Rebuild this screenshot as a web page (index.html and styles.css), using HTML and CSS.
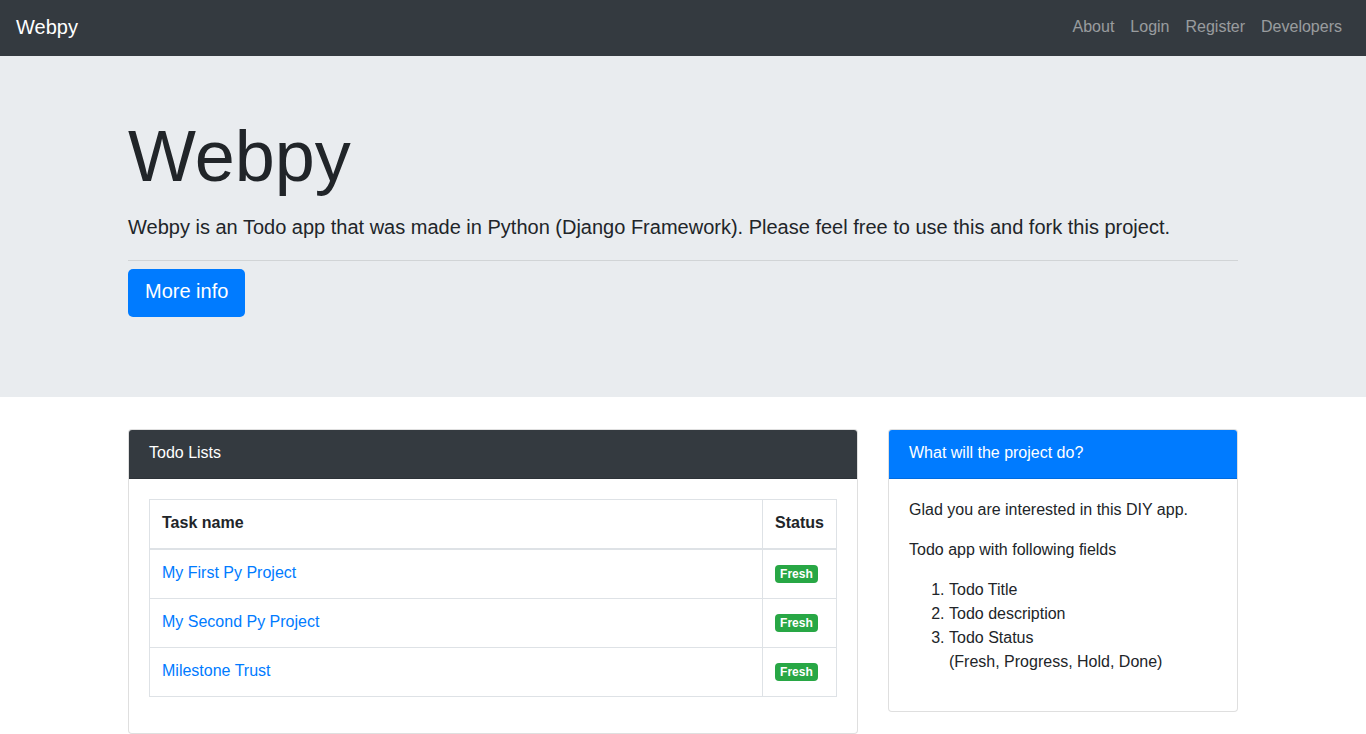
FILE: index.html
```html
<!DOCTYPE html>
<html lang="en">
<head>
<meta charset="utf-8">
<title>Webpy</title>
<link rel="stylesheet" href="styles.css">
</head>
<body>
<nav class="navbar">
  <a class="brand" href="#">Webpy</a>
  <ul class="nav">
    <li><a class="nav-link" href="#">About</a></li>
    <li><a class="nav-link" href="#">Login</a></li>
    <li><a class="nav-link" href="#">Register</a></li>
    <li><a class="nav-link" href="#">Developers</a></li>
  </ul>
</nav>

<section class="jumbotron">
  <div class="container">
    <h1 class="display">Webpy</h1>
    <p class="lead">Webpy is an Todo app that was made in Python (Django Framework). Please feel free to use this and fork this project.</p>
    <hr class="divider">
    <a class="btn-primary" href="#">More info</a>
  </div>
</section>

<main class="container cards">
  <div class="card">
    <div class="card-header dark">Todo Lists</div>
    <div class="card-body">
      <table class="table">
        <thead>
          <tr><th class="col-name">Task name</th><th class="col-status">Status</th></tr>
        </thead>
        <tbody>
          <tr><td><a href="#">My First Py Project</a></td><td><span class="badge">Fresh</span></td></tr>
          <tr><td><a href="#">My Second Py Project</a></td><td><span class="badge">Fresh</span></td></tr>
          <tr><td><a href="#">Milestone Trust</a></td><td><span class="badge">Fresh</span></td></tr>
        </tbody>
      </table>
    </div>
  </div>

  <div class="card side">
    <div class="card-header primary">What will the project do?</div>
    <div class="card-body text-body">
      <p>Glad you are interested in this DIY app.</p>
      <p>Todo app with following fields</p>
      <ol>
        <li>Todo Title</li>
        <li>Todo description</li>
        <li>Todo Status<br>(Fresh, Progress, Hold, Done)</li>
      </ol>
    </div>
  </div>
</main>
</body>
</html>
```

FILE: styles.css
```css
* { box-sizing: border-box; }

html, body {
  margin: 0;
  padding: 0;
}

body {
  font-family: "Liberation Sans", Arial, sans-serif;
  font-size: 16px;
  line-height: 1.5;
  color: #212529;
  background: #fff;
}

a {
  color: #007bff;
  text-decoration: none;
}

/* Navbar */
.navbar {
  display: flex;
  align-items: center;
  justify-content: space-between;
  height: 56px;
  padding: 8px 16px;
  background: #343a40;
}

.brand {
  color: #fff;
  font-size: 20px;
  line-height: 30px;
  padding: 4px 0 6px;
}

.nav {
  display: flex;
  list-style: none;
  margin: 0;
  padding: 0;
}

.nav-link {
  display: block;
  padding: 7px 8px 9px;
  color: rgba(255, 255, 255, 0.5);
  line-height: 24px;
}

/* Jumbotron */
.jumbotron {
  background: #e9ecef;
  padding: 57px 0 80px;
}

.container {
  width: 1110px;
  margin: 0 auto;
}

.display {
  font-size: 72px;
  font-weight: 400;
  line-height: 86px;
  margin: 0 0 13px;
}

.lead {
  font-size: 20px;
  line-height: 30px;
  margin: 0 0 18px;
}

.divider {
  border: 0;
  border-top: 1px solid rgba(0, 0, 0, 0.1);
  margin: 0 0 8px;
  height: 0;
}

.btn-primary {
  display: block;
  width: fit-content;
  background: #007bff;
  color: #fff;
  font-size: 20px;
  line-height: 30px;
  padding: 7px 17px 11px;
  border-radius: 5px;
  height: 48px;
}

/* Cards */
.cards {
  display: grid;
  grid-template-columns: 730px 350px;
  column-gap: 30px;
  align-items: start;
  margin-top: 32px;
}

.card {
  border: 1px solid rgba(0, 0, 0, 0.125);
  border-radius: 4px;
  background: #fff;
}

.card-header {
  padding: 11px 20px 13px;
  line-height: 24px;
  color: #fff;
  border-bottom: 1px solid rgba(0, 0, 0, 0.125);
  border-radius: 3px 3px 0 0;
}

.card-header.dark { background: #343a40; }
.card-header.primary { background: #007bff; }

.card-body {
  padding: 20px;
}

.card-body.text-body {
  padding: 19px 20px 21px;
}

.card-body p {
  margin: 0 0 16px;
}

.card-body ol {
  margin: 0 0 16px;
  padding-left: 40px;
}

/* Table */
.table {
  width: 100%;
  border-collapse: collapse;
  margin-bottom: 16px;
}

.table th,
.table td {
  border: 1px solid #dee2e6;
  padding: 11px 12px 13px;
  text-align: left;
  vertical-align: top;
  line-height: 24px;
}

.table thead th {
  border-bottom: 2px solid #dee2e6;
  font-weight: 700;
  vertical-align: bottom;
}

.table .col-name {
  width: 100%;
}

.table .col-status {
  white-space: nowrap;
}

.badge {
  display: inline-block;
  background: #28a745;
  color: #fff;
  font-size: 12px;
  font-weight: 700;
  line-height: 1;
  padding: 3px 5px;
  border-radius: 4px;
  vertical-align: baseline;
}
```
